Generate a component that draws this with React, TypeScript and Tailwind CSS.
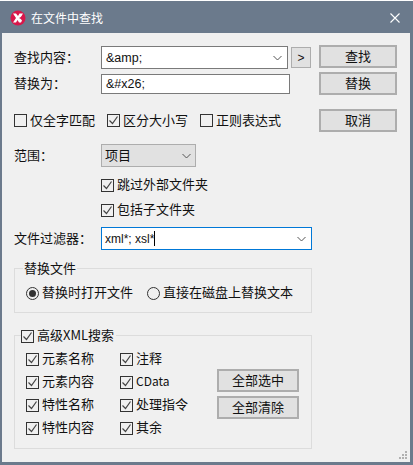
import React from "react";

const font = { fontFamily: '"Noto Sans CJK SC", "Liberation Sans", sans-serif' };

function Chevron({ className = "" }: { className?: string }) {
  return (
    <svg width="9" height="6" viewBox="0 0 9 6" className={className}>
      <path d="M0.5 1l4 4 4-4" fill="none" stroke="#555" strokeWidth="1" />
    </svg>
  );
}

function Check({
  label,
  checked = true,
  className = "",
  labelClass = "",
}: {
  label: string;
  checked?: boolean;
  className?: string;
  labelClass?: string;
}) {
  return (
    <div className={`flex items-center gap-[3px] h-[18px] ${className}`}>
      <span className="w-[13px] h-[13px] border border-[#333] flex items-center justify-center shrink-0">
        {checked && (
          <svg width="11" height="11" viewBox="0 0 11 11">
            <path d="M1.5 5.500l3 3 5-7" fill="none" stroke="#444" strokeWidth="1.2" />
          </svg>
        )}
      </span>
      <span className={`whitespace-nowrap pb-[2px] ${labelClass}`}>{label}</span>
    </div>
  );
}

function Radio({ label, checked = false }: { label: string; checked?: boolean }) {
  return (
    <div className="flex items-center gap-[3px]">
      <span className="w-[13px] h-[13px] rounded-full border border-[#333] flex items-center justify-center shrink-0">
        {checked && <span className="w-[7px] h-[7px] rounded-full bg-[#333]" />}
      </span>
      <span className="whitespace-nowrap pb-[2px]">{label}</span>
    </div>
  );
}

function Btn({ label, className = "" }: { label: string; className?: string }) {
  return (
    <div className={`border-2 border-[#adadad] bg-[#e1e1e1] flex items-center justify-center pb-[2px] ${className}`}>
      {label}
    </div>
  );
}

export default function App() {
  return (
    <div
      className="w-[413px] h-[465px] bg-[#6b7a8c] pt-px pl-[2px] pr-[3px] pb-[3px] border-t border-white overflow-hidden text-[13px] leading-[18px] text-[#111]"
      style={font}
    >
      <div className="h-[31px] flex items-center pl-[8px] pr-[10px] text-white">
        <svg width="16" height="16" viewBox="0 0 16 16" className="shrink-0">
          <circle cx="8" cy="8" r="7.500" fill="#d8174a" />
          <path d="M3 3.500h3l2 2.500 1.500-2.500H13l-1.500 2.500L10 8l2 2.500-1 2H9L7.500 10 6 12.500H3L6 8z" fill="#fff" />
          <path d="M9.500 7.500h1.500v1h-1.500z" fill="#d8174a" />
        </svg>
        <span className="ml-[5px] text-[12px]">在文件中查找</span>
        <svg width="10" height="10" viewBox="0 0 10 10" className="ml-auto">
          <path d="M0.500 0.500l9 9M9.500 0.500l-9 9" stroke="#fff" strokeWidth="1.1" />
        </svg>
      </div>
      <div className="relative bg-[#f0f0f0] h-[429px] pt-[13px] pl-[12px]">
        <div className="flex h-[23px] items-center">
          <span className="w-[87px] pb-[2px]">查找内容：</span>
          <div className="w-[187px] h-[23px] border border-[#7a7a7a] bg-white flex items-center pl-[4px] pr-[5px]">
            <span className="font-['Liberation_Sans'] text-[12.5px]">&amp;amp;</span>
            <Chevron className="ml-auto" />
          </div>
          <div className="w-[20px] h-[21px] ml-[3px] border border-[#adadad] bg-[#e1e1e1] flex items-center justify-center font-['Liberation_Sans'] text-[12px]">
            &gt;
          </div>
          <Btn label="查找" className="w-[78px] h-[23px] ml-[8px] -mt-[2px]" />
        </div>
        <div className="flex h-[23px] items-center mt-[3px]">
          <span className="w-[87px] pb-[2px]">替换为：</span>
          <div className="w-[189px] h-[20px] border border-[#7a7a7a] bg-white flex items-center pl-[4px]">
            <span className="font-['Liberation_Sans'] text-[12.5px]">&amp;#x26;</span>
          </div>
          <div className="w-[29px]" />
          <Btn label="替换" className="w-[78px] h-[23px]" />
        </div>
        <div className="flex h-[23px] items-center mt-[14px]">
          <Check label="仅全字匹配" checked={false} className="w-[93px]" />
          <Check label="区分大小写" className="w-[93px]" />
          <Check label="正则表达式" checked={false} className="w-[119px]" />
          <Btn label="取消" className="w-[78px] h-[23px]" />
        </div>
        <div className="flex h-[23px] items-center mt-[12px]">
          <span className="w-[87px] pb-[2px]">范围：</span>
          <div className="w-[95px] h-[23px] border border-[#adadad] bg-[#e1e1e1] flex items-center pl-[3px] pr-[4px]">
            <span className="pb-[2px]">项目</span>
            <Chevron className="ml-auto" />
          </div>
        </div>
        <div className="ml-[87px] mt-[9px]">
          <Check label="跳过外部文件夹" />
          <Check label="包括子文件夹" className="mt-[7px]" />
        </div>
        <div className="flex h-[23px] items-center mt-[8px]">
          <span className="w-[87px] pb-[2px]">文件过滤器：</span>
          <div className="w-[211px] h-[23px] border border-[#0078d7] bg-white flex items-center pl-[3px] pr-[5px]">
            <span className="font-['Liberation_Sans'] text-[12px]">xml*; xsl*</span>
            <span className="w-px h-[15px] bg-black" />
            <Chevron className="ml-auto" />
          </div>
        </div>
        <div className="relative w-[298px] h-[45px] mt-[18px] border border-[#dcdcdc]">
          <span className="absolute left-[8px] -top-[10px] bg-[#f0f0f0] px-px pb-[1px]">替换文件</span>
          <div className="flex items-center gap-[14px] pl-[11px] pt-[14px]">
            <Radio label="替换时打开文件" checked />
            <Radio label="直接在磁盘上替换文本" />
          </div>
        </div>
        <div className="relative w-[298px] h-[114px] mt-[22px] border border-[#dcdcdc]">
          <div className="absolute left-[6px] -top-[9px] bg-[#f0f0f0] pr-[2px]">
            <Check label="高级XML搜索" />
          </div>
          <div className="flex pl-[11px] pt-[14px]">
            <div className="w-[94px] flex flex-col gap-[5px]">
              <Check label="元素名称" />
              <Check label="元素内容" />
              <Check label="特性名称" />
              <Check label="特性内容" />
            </div>
            <div className="w-[97px] flex flex-col gap-[5px]">
              <Check label="注释" />
              <Check label="CData" labelClass="text-[12px]" />
              <Check label="处理指令" />
              <Check label="其余" />
            </div>
            <div className="flex flex-col gap-[4px] pt-[19px]">
              <Btn label="全部选中" className="w-[82px] h-[23px]" />
              <Btn label="全部清除" className="w-[82px] h-[23px]" />
            </div>
          </div>
        </div>
        <svg width="8" height="8" viewBox="0 0 8 8" className="absolute right-[3px] bottom-[3px]">
          <g fill="#b0b0b0">
            <rect x="6" y="0" width="2" height="2" />
            <rect x="3" y="3" width="2" height="2" />
            <rect x="6" y="3" width="2" height="2" />
            <rect x="0" y="6" width="2" height="2" />
            <rect x="3" y="6" width="2" height="2" />
            <rect x="6" y="6" width="2" height="2" />
          </g>
        </svg>
      </div>
    </div>
  );
}
